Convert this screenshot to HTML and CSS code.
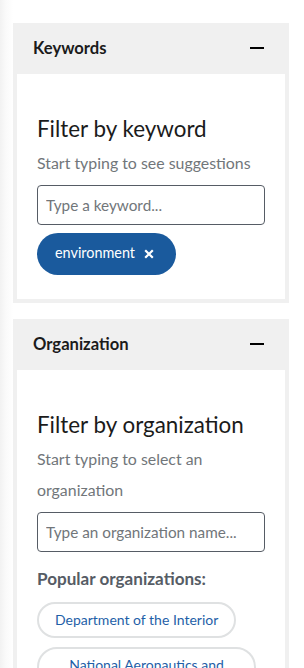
FILE: index.html
```html
<!DOCTYPE html>
<html lang="en">
<head>
<meta charset="utf-8">
<title>Filters</title>
<link rel="stylesheet" href="styles.css">
</head>
<body>
<div class="sidebar">
  <section class="panel">
    <div class="panel-header">
      <span class="panel-title">Keywords</span>
      <span class="collapse" aria-hidden="true"></span>
    </div>
    <div class="panel-body">
      <h2 class="filter-title">Filter by keyword</h2>
      <p class="filter-hint">Start typing to see suggestions</p>
      <input class="filter-input" type="text" placeholder="Type a keyword...">
      <div class="tags">
        <span class="tag">environment
          <svg class="tag-x" width="10" height="10" viewBox="0 0 10 10" aria-hidden="true">
            <path d="M1.2 1.2 L8.8 8.8 M8.8 1.2 L1.2 8.8" stroke="#fff" stroke-width="2.2" fill="none"/>
          </svg>
        </span>
      </div>
    </div>
  </section>
  <section class="panel">
    <div class="panel-header">
      <span class="panel-title">Organization</span>
      <span class="collapse" aria-hidden="true"></span>
    </div>
    <div class="panel-body">
      <h2 class="filter-title">Filter by organization</h2>
      <p class="filter-hint">Start typing to select an organization</p>
      <input class="filter-input" type="text" placeholder="Type an organization name...">
      <h3 class="popular-title">Popular organizations:</h3>
      <div class="org-list">
        <button class="org-chip">Department of the Interior</button>
        <button class="org-chip">National Aeronautics and Space Administration</button>
      </div>
    </div>
  </section>
</div>
</body>
</html>
```

FILE: styles.css
```css
* { box-sizing: border-box; }
html, body { height: 100%; }
body {
  margin: 0;
  font-family: "Lato", "Liberation Sans", sans-serif;
  color: #1b1b1b;
  background: linear-gradient(to right, #f2f2f2 0, #fafafa 6px, #ffffff 13px);
  overflow: hidden;
}
.sidebar {
  padding: 23px 15px 0 13px;
  display: flex;
  flex-direction: column;
  gap: 16px;
}
.panel {
  background: #f0f0f0;
  padding: 0 4px 4px;
}
.panel-header {
  height: 51px;
  display: flex;
  align-items: center;
  justify-content: space-between;
  padding: 0 21px 1px 16px;
}
.panel-title {
  font-weight: 700;
  font-size: 16.6px;
  line-height: 20px;
}
.collapse {
  width: 14px;
  height: 2px;
  background: #000;
}
.panel-body {
  background: #fff;
  padding: 41px 20px 24px;
}
.filter-title {
  margin: 0;
  font-weight: 400;
  font-size: 22.4px;
  line-height: 28px;
}
.filter-hint {
  margin: 4px 0 0;
  font-size: 15.9px;
  line-height: 31px;
  color: #71767a;
}
.filter-input {
  display: block;
  width: 100%;
  height: 40px;
  margin: 7px 0 0;
  border: 1px solid #565c65;
  border-radius: 4px;
  padding: 0 8px;
  font-family: inherit;
  font-size: 15.3px;
  color: #1b1b1b;
  background: #fff;
}
.filter-input::placeholder { color: #71767a; opacity: 1; }
.tags {
  margin-top: 8px;
  display: flex;
}
.tag {
  display: inline-flex;
  align-items: center;
  gap: 9px;
  height: 42px;
  padding: 0 22px 3px 18px;
  border-radius: 21px;
  background: #1a5a9d;
  color: #fff;
  font-size: 14.4px;
}
.tag-x {
  display: block;
  margin-top: 2px;
}
.popular-title {
  margin: 16px 0 0;
  font-size: 17.1px;
  line-height: 22px;
  font-weight: 700;
  color: #565c65;
}
.org-list {
  margin-top: 12px;
  display: flex;
  flex-direction: column;
  align-items: flex-start;
  gap: 9px;
}
.org-chip {
  max-width: 219px;
  padding: 6px 16px;
  border: 2px solid #dfe1e2;
  border-radius: 20px;
  background: #fff;
  color: #1f5fa8;
  font-family: inherit;
  font-size: 14px;
  line-height: 20px;
  text-align: center;
}
```
